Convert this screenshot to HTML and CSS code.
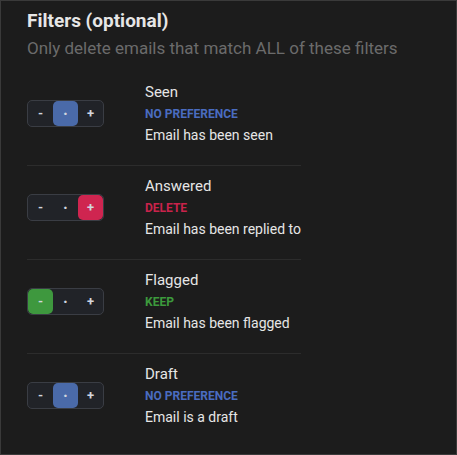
FILE: index.html
```html
<!DOCTYPE html>
<html>
<head>
<meta charset="utf-8">
<link rel="stylesheet" href="styles.css">
</head>
<body>
<div class="panel">
  <h2 class="title">Filters (optional)</h2>
  <p class="subtitle">Only delete emails that match ALL of these filters</p>
  <div class="rows">
    <div class="row">
      <div class="toggle">
        <span class="seg">-</span>
        <span class="seg dot active-blue">·</span>
        <span class="seg">+</span>
      </div>
      <div class="info">
        <div class="name">Seen</div>
        <div class="state blue">NO PREFERENCE</div>
        <div class="desc">Email has been seen</div>
      </div>
    </div>
    <div class="row">
      <div class="toggle">
        <span class="seg">-</span>
        <span class="seg dot">·</span>
        <span class="seg active-red">+</span>
      </div>
      <div class="info">
        <div class="name">Answered</div>
        <div class="state red">DELETE</div>
        <div class="desc">Email has been replied to</div>
      </div>
    </div>
    <div class="row">
      <div class="toggle">
        <span class="seg active-green">-</span>
        <span class="seg dot">·</span>
        <span class="seg">+</span>
      </div>
      <div class="info">
        <div class="name">Flagged</div>
        <div class="state green">KEEP</div>
        <div class="desc">Email has been flagged</div>
      </div>
    </div>
    <div class="row">
      <div class="toggle">
        <span class="seg">-</span>
        <span class="seg dot active-blue">·</span>
        <span class="seg">+</span>
      </div>
      <div class="info">
        <div class="name">Draft</div>
        <div class="state blue">NO PREFERENCE</div>
        <div class="desc">Email is a draft</div>
      </div>
    </div>
  </div>
</div>
</body>
</html>
```
FILE: styles.css
```css
html, body {
  margin: 0;
  padding: 0;
  background: #1c1c1c;
}
body {
  font-family: Roboto, "Liberation Sans", sans-serif;
}
.panel {
  box-sizing: border-box;
  width: 457px;
  height: 455px;
  border: 1px solid #3a3a3a;
  background: #1c1c1c;
  padding: 9px 26px 0 26px;
}
.title {
  margin: 0;
  font-size: 19px;
  line-height: 22px;
  font-weight: 700;
  color: #e6e6e6;
}
.subtitle {
  margin: 5px 0 0 0;
  font-size: 17px;
  line-height: 22px;
  color: #6b6b6b;
}
.rows {
  margin-top: 12.5px;
  width: 274px;
}
.row {
  display: flex;
  align-items: center;
  gap: 41px;
  padding: 10px 0 19.5px 0;
  border-bottom: 1px solid #2c2c2c;
}
.row:last-child {
  border-bottom: none;
}
.toggle {
  display: flex;
  box-sizing: border-box;
  width: 77px;
  height: 27px;
  border: 1px solid #3a3d44;
  border-radius: 5px;
  background: #212328;
  flex: none;
}
.seg {
  width: 25px;
  height: 25px;
  display: flex;
  align-items: center;
  justify-content: center;
  font-size: 13px;
  font-weight: 700;
  color: #d2d6de;
  border-radius: 5px;
}
.seg.dot {
  font-size: 16px;
}
.active-blue { background: #4a6aa9; }
.active-red { background: #cf2550; }
.active-green { background: #3e983e; }
.info {
  display: flex;
  flex-direction: column;
}
.name {
  font-size: 15px;
  line-height: 20px;
  color: #e6e6e6;
}
.state {
  margin-top: 4.5px;
  font-size: 12px;
  line-height: 16px;
  font-weight: 700;
}
.state.blue { color: #4a6cc0; }
.state.red { color: #c9234b; }
.state.green { color: #3c9a3c; }
.desc {
  margin-top: 3px;
  font-size: 14px;
  line-height: 20px;
  color: #e6e6e6;
}
```
